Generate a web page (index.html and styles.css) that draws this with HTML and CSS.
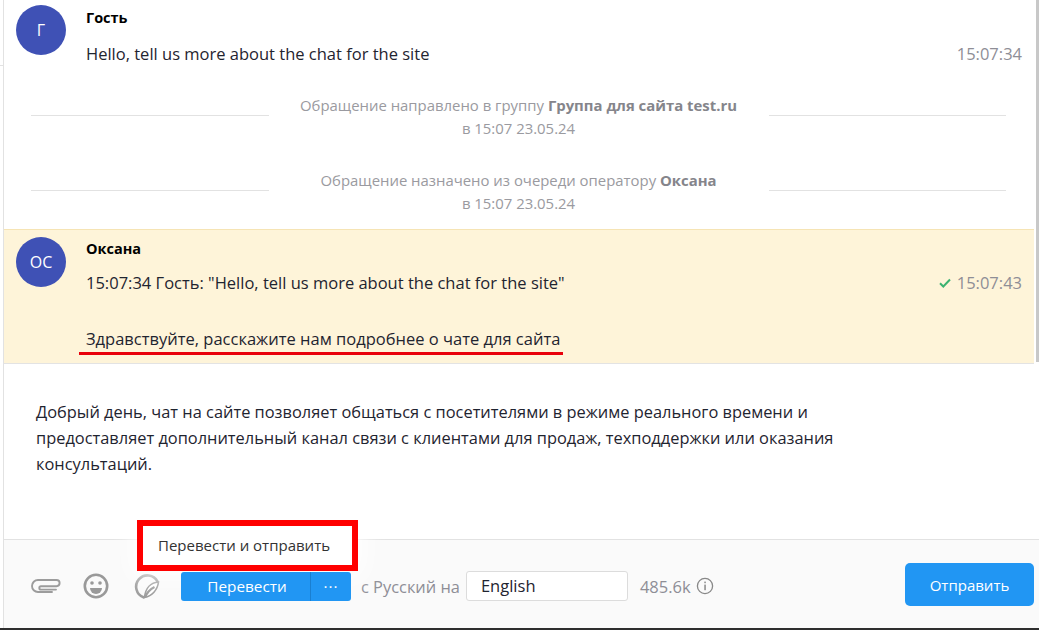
FILE: index.html
```html
<!DOCTYPE html>
<html lang="ru">
<head>
<meta charset="utf-8">
<title>Чат</title>
<link rel="stylesheet" href="styles.css">
</head>
<body>
<div class="app">
  <span class="edge-tick"></span>
  <span class="scrollbar"></span>
  <main class="chat">
    <section class="msg msg-guest">
      <div class="avatar">Г</div>
      <div class="msg-body">
        <div class="name">Гость</div>
        <div class="msg-line">
          <p class="text">Hello, tell us more about the chat for the site</p>
          <span class="time">15:07:34</span>
        </div>
      </div>
    </section>
    <section class="notice notice-first">
      <span class="rule"></span>
      <div class="notice-text">Обращение направлено в группу <b>Группа для сайта test.ru</b><br>в 15:07 23.05.24</div>
      <span class="rule"></span>
    </section>
    <section class="notice notice-second">
      <span class="rule"></span>
      <div class="notice-text">Обращение назначено из очереди оператору <b>Оксана</b><br>в 15:07 23.05.24</div>
      <span class="rule"></span>
    </section>
    <section class="msg msg-operator">
      <div class="avatar">ОС</div>
      <div class="msg-body">
        <div class="name">Оксана</div>
        <div class="msg-line">
          <p class="text">15:07:34 Гость: "Hello, tell us more about the chat for the site"</p>
          <span class="time">
            <svg class="check" viewBox="0 0 12 10" width="12" height="10"><path d="M1 5.2 4.3 8.5 11 1.5" fill="none" stroke="#3cb371" stroke-width="2"/></svg>
            15:07:43
          </span>
        </div>
        <p class="text translated">Здравствуйте, расскажите нам подробнее о чате для сайта<span class="underline"></span></p>
      </div>
    </section>
  </main>
  <div class="composer">Добрый день, чат на сайте позволяет общаться с посетителями в режиме реального времени и<br>предоставляет дополнительный канал связи с клиентами для продаж, техподдержки или оказания<br>консультаций.</div>
  <footer class="toolbar">
    <div class="tools">
      <svg class="tool tool-clip" viewBox="0 0 31 14" width="31" height="14"><path d="M21 13H7a6 6 0 0 1 0-12H25.5a3.1 3.1 0 0 1 0 6.2H10a1.7 1.7 0 0 0 0 3.4H25" fill="none" stroke="#9c9c9c" stroke-width="1.9" stroke-linecap="round"/></svg>
      <svg class="tool tool-smile" viewBox="0 0 26 26" width="26" height="26"><circle cx="13" cy="13" r="11.2" fill="none" stroke="#999" stroke-width="2.6"/><circle cx="9" cy="10" r="1.8" fill="#999"/><circle cx="17" cy="10" r="1.8" fill="#999"/><path d="M7 15h12a6 6 0 0 1-12 0z" fill="#999"/></svg>
      <svg class="tool tool-sticker" viewBox="0 0 27 26" width="27" height="26"><path d="M10.5 24.3A11.3 11.3 0 1 1 24.5 8.5" fill="none" stroke="#999" stroke-width="2.6" stroke-linecap="round"/><path d="M25.5 9C18 9.5 12.5 15 11.5 24.5 19 23 24.5 17 25.5 9z" fill="#fff" stroke="#999" stroke-width="1.6"/><path d="M12 24.5C14 19.5 17.5 16 21.5 14" fill="none" stroke="#999" stroke-width="2.2"/></svg>
    </div>
    <div class="split">
      <button class="split-main">Перевести</button>
      <button class="split-more">···</button>
    </div>
    <span class="hint hint-lang">с Русский на</span>
    <div class="lang">English</div>
    <span class="hint hint-count">485.6k</span>
    <svg class="info" viewBox="0 0 18 18" width="18" height="18"><circle cx="9" cy="9" r="7.6" fill="none" stroke="#888" stroke-width="1.3"/><rect x="8.3" y="7.6" width="1.5" height="5.6" fill="#888"/><rect x="8.3" y="4.6" width="1.5" height="1.6" fill="#888"/></svg>
    <button class="send">Отправить</button>
  </footer>
  <div class="popup">Перевести и отправить</div>
</div>
</body>
</html>
```

FILE: styles.css
```css
* {
  box-sizing: border-box;
}

html,
body {
  margin: 0;
  height: 100%;
  overflow: hidden;
  background: #fff;
}

.app {
  position: relative;
  display: flex;
  flex-direction: column;
  width: 1039px;
  height: 630px;
  padding-left: 3px;
  border-bottom: 2px solid #2e2e2e;
  font-family: "Open Sans", "Noto Sans", sans-serif;
  font-size: 16.5px;
  color: #1f2430;
}

.app::before {
  content: "";
  position: absolute;
  left: 3px;
  top: 0;
  bottom: 0;
  width: 1px;
  background: #e2e2e2;
}

.edge-tick {
  position: absolute;
  left: 0;
  top: 65px;
  width: 3px;
  height: 1px;
  background: #e2e2e2;
}

.scrollbar {
  position: absolute;
  right: 0;
  top: 0;
  width: 3px;
  height: 362px;
  background: #c8c8c8;
  z-index: 2;
}

.chat {
  display: flex;
  flex-direction: column;
  margin-right: 5px;
  margin-left: 1px;
}

.msg {
  display: flex;
}

.msg-guest {
  padding: 5px 12px 0 12px;
  height: 94px;
}

.msg-operator {
  height: 135px;
  margin-top: 14px;
  padding: 7px 12px 0 12px;
  background: #fef4d9;
  border-top: 1px solid #f6e4b4;
  border-bottom: 1px solid #e3e3e3;
}

.avatar {
  flex: none;
  display: flex;
  align-items: center;
  justify-content: center;
  width: 50px;
  height: 50px;
  margin-right: 20px;
  padding-bottom: 1px;
  border-radius: 50%;
  background: #3f51b5;
  color: #fff;
  font-size: 16px;
}

.msg-body {
  flex: 1;
  min-width: 0;
}

.name {
  height: 24px;
  margin-top: 1px;
  font-size: 14.5px;
  line-height: 24px;
  font-weight: 700;
  color: #000;
}

.msg-operator .name {
  margin-top: 0;
}

.msg-line {
  display: flex;
  justify-content: space-between;
  margin-top: 11px;
}

.msg-operator .msg-line {
  margin-top: 9px;
}

.text {
  margin: 0;
  line-height: 26px;
}

.time {
  display: flex;
  align-items: center;
  gap: 6px;
  line-height: 26px;
  color: #8e8e96;
}

.translated {
  position: relative;
  display: table;
  margin-top: 30px;
}

.underline {
  position: absolute;
  left: -7px;
  right: -3px;
  bottom: -3px;
  height: 3px;
  background: #e8000b;
}

.notice {
  display: flex;
  align-items: center;
  justify-content: center;
  height: 46px;
  padding: 0 28px 0 27px;
}

.notice-second {
  margin-top: 29px;
}

.rule {
  flex: 1;
  height: 1px;
  margin-bottom: 3px;
  background: #e2e2e2;
}

.notice-text {
  width: 500px;
  font-size: 14.9px;
  line-height: 23px;
  text-align: center;
  color: #9a9aa0;
}

.notice-text b {
  color: #85858b;
}

.composer {
  flex: 1;
  padding: 35px 33px 0;
  font-size: 16.4px;
  line-height: 26px;
}

.toolbar {
  display: flex;
  align-items: center;
  height: 89px;
  padding: 4px 5px 0 27px;
  margin-left: 1px;
  background: #fafafa;
  border-top: 1px solid #e2e2e2;
}

.tools {
  display: flex;
  align-items: center;
  gap: 21px;
  width: 150px;
}

.tool {
  flex: none;
}

.tool-sticker {
  margin-left: 3px;
}

.split {
  position: relative;
  z-index: 4;
  display: flex;
  height: 29px;
  border-radius: 3px;
  overflow: hidden;
}

.split button {
  border: 0;
  color: #fff;
  background: #2196f3;
  font: inherit;
  font-size: 15.3px;
  padding: 0;
}

.split .split-main {
  width: 130px;
  padding-left: 3px;
  border-right: 1px solid #1a7fd0;
}

.split-more {
  width: 40px;
  font-weight: 700;
  letter-spacing: 1px;
}

.hint {
  color: #8e8e96;
}

.hint-lang {
  margin-left: 10px;
  font-size: 16.4px;
}

.hint-count {
  margin-left: 12px;
}

.lang {
  width: 162px;
  height: 30px;
  margin-left: 6px;
  padding-left: 14px;
  line-height: 28px;
  background: #fff;
  border: 1px solid #dcdcdc;
  border-radius: 3px;
}

.info {
  margin-left: 5px;
}

.send {
  width: 129px;
  height: 43px;
  margin-top: -3px;
  margin-left: auto;
  border: 0;
  border-radius: 5px;
  background: #2196f3;
  color: #fff;
  font: inherit;
  font-size: 15px;
}

.popup {
  position: absolute;
  left: 137px;
  top: 520px;
  width: 221px;
  height: 51px;
  padding-left: 15px;
  border: 6px solid #f00;
  background: #fff;
  box-shadow: 0 0 24px 6px rgba(255, 255, 255, 0.9);
  color: #333;
  font-size: 15px;
  line-height: 39px;
  z-index: 3;
}
```
